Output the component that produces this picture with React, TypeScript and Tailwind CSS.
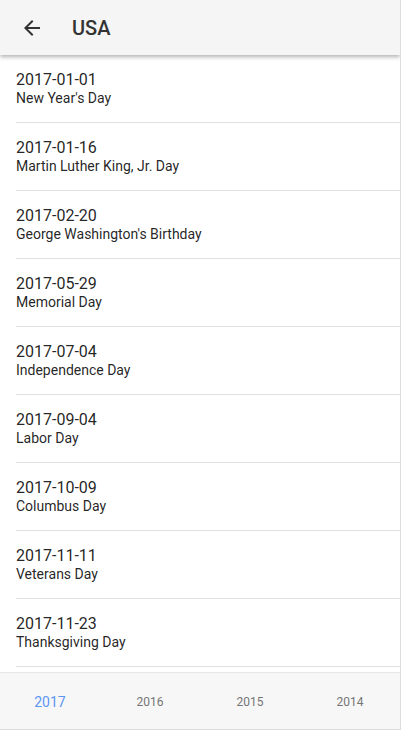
import React from "react";

const holidays = [
  ["2017-01-01", "New Year's Day"],
  ["2017-01-16", "Martin Luther King, Jr. Day"],
  ["2017-02-20", "George Washington's Birthday"],
  ["2017-05-29", "Memorial Day"],
  ["2017-07-04", "Independence Day"],
  ["2017-09-04", "Labor Day"],
  ["2017-10-09", "Columbus Day"],
  ["2017-11-11", "Veterans Day"],
  ["2017-11-23", "Thanksgiving Day"],
];

export default function App() {
  return (
    <div
      className="w-[401px] h-[730px] flex flex-col bg-white border-r border-b border-[#dcdcdc] overflow-hidden"
      style={{ fontFamily: "Roboto, 'Liberation Sans', sans-serif" }}
    >
      <header className="relative z-10 h-[55px] shrink-0 flex items-center bg-[#f5f5f5] shadow-[0_2px_4px_rgba(0,0,0,0.3)]">
        <div className="w-[72px] flex items-center pl-5 pt-[1px]">
          <svg width="24" height="24" viewBox="0 0 24 24" fill="#333">
            <path d="M20 11H7.83l5.59-5.59L12 4l-8 8 8 8 1.41-1.41L7.83 13H20v-2z" />
          </svg>
        </div>
        <h1 className="text-[20px] font-medium text-[#333] leading-none pt-[1px]">USA</h1>
      </header>
      <div className="flex-1 overflow-hidden">
        {holidays.map(([d, n]) => (
          <div key={d} className="pl-4">
            <div className="pt-[15px] pb-[16px] border-b border-[#e0e0e0]">
              <div className="text-[16px] leading-[20px] text-[rgba(0,0,0,0.87)]">{d}</div>
              <div className="text-[14px] leading-[16px] text-[rgba(0,0,0,0.87)]">{n}</div>
            </div>
          </div>
        ))}
      </div>
      <nav className="h-[57px] shrink-0 grid grid-cols-4 items-center bg-[#f7f7f7] border-t border-[#e6e6e6]">
        <div className="text-center text-[14px] leading-[20px] text-[#5c95f2] pt-[1px]">2017</div>
        <div className="text-center text-[12px] leading-[20px] text-[#757575] pt-[1px]">2016</div>
        <div className="text-center text-[12px] leading-[20px] text-[#757575] pt-[1px]">2015</div>
        <div className="text-center text-[12px] leading-[20px] text-[#757575] pt-[1px]">2014</div>
      </nav>
    </div>
  );
}
